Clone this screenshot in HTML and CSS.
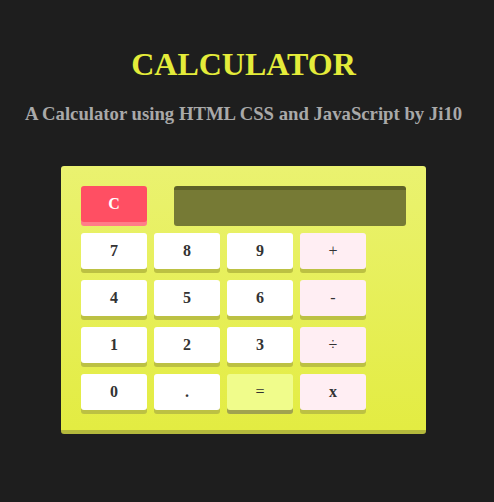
FILE: index.html
```html
<!DOCTYPE html>
<html>
<head>
<meta charset="utf-8">
<title>Calculator</title>
<link rel="stylesheet" href="styles.css">
</head>
<body>
<div class="page">
  <h1 class="title">CALCULATOR</h1>
  <h3 class="subtitle">A Calculator using HTML CSS and JavaScript by Ji10</h3>
  <div class="calc">
    <div class="top-row">
      <button class="key key-clear">C</button>
      <div class="screen"></div>
    </div>
    <div class="keys">
      <button class="key">7</button>
      <button class="key">8</button>
      <button class="key">9</button>
      <button class="key key-op">+</button>
      <button class="key">4</button>
      <button class="key">5</button>
      <button class="key">6</button>
      <button class="key key-op">-</button>
      <button class="key">1</button>
      <button class="key">2</button>
      <button class="key">3</button>
      <button class="key key-op">÷</button>
      <button class="key">0</button>
      <button class="key">.</button>
      <button class="key key-eq">=</button>
      <button class="key key-op">x</button>
    </div>
  </div>
</div>
</body>
</html>
```

FILE: styles.css
```css
html, body {
  margin: 0;
  padding: 0;
  background: #1e1e1e;
}
body {
  font-family: "Liberation Serif", "Times New Roman", serif;
}
.page {
  padding: 46px 7px 0 0;
  display: flex;
  flex-direction: column;
  align-items: center;
}
.title {
  margin: 0;
  font-size: 32px;
  line-height: 36px;
  font-weight: bold;
  color: #e4ec3a;
}
.subtitle {
  margin: 21px 0 0;
  font-size: 18.72px;
  line-height: 22px;
  font-weight: bold;
  color: #a9a9a9;
}
.calc {
  margin-top: 41px;
  width: 325px;
  padding: 20px 20px 16px;
  border-radius: 3px;
  background: linear-gradient(to bottom, #eaf270, #e3ec42);
  border-bottom: 4px solid #b4b93c;
}
.top-row {
  display: flex;
  gap: 27px;
  margin-bottom: 7px;
}
.screen {
  flex: 1;
  height: 36px;
  border-radius: 3px;
  background: #767a35;
  border-top: 4px solid #5e6128;
}
.keys {
  display: grid;
  grid-template-columns: repeat(4, 66px);
  column-gap: 7px;
  row-gap: 7px;
}
.key {
  display: block;
  width: 66px;
  height: 36px;
  margin: 0 0 4px;
  padding: 0;
  border: none;
  border-radius: 3px;
  background: #ffffff;
  box-shadow: 0 4px 0 #bcc143;
  font-family: "Liberation Serif", "Times New Roman", serif;
  font-size: 16px;
  font-weight: bold;
  color: #333333;
  line-height: 36px;
  text-align: center;
}
.key-clear {
  flex: none;
  margin: 0;
  background: #ff4f63;
  box-shadow: 0 4px 0 #ff7d88;
  color: #ffffff;
}
.key-op {
  background: #ffeef3;
  font-weight: normal;
}
.key-op:last-child {
  font-weight: bold;
}
.key-eq {
  background: #f0fc8b;
  box-shadow: 0 4px 0 #a0a350;
  font-weight: normal;
}
```
